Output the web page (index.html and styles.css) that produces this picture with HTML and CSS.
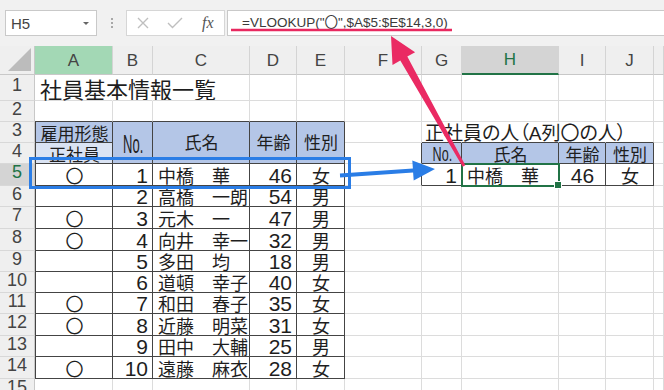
FILE: index.html
```html
<!DOCTYPE html>
<html lang="ja">
<head>
<meta charset="utf-8">
<title>VLOOKUP</title>
<link rel="stylesheet" href="styles.css">
</head>
<body>
<div class="app">
  <div class="toolbar">
    <div class="namebox"><span>H5</span><span class="caret"></span></div>
    <div class="grip"><i></i><i></i><i></i></div>
    <div class="fbtns">
      <svg class="ic ic-x" width="12" height="12" viewBox="0 0 12 12"><path d="M1 1L11 11M11 1L1 11"/></svg>
      <svg class="ic ic-ok" width="16" height="12" viewBox="0 0 16 12"><path d="M1 6L5.5 10.5L15 1"/></svg>
      <span class="fx">fx</span>
    </div>
    <div class="formula">=VLOOKUP("〇",$A$5:$E$14,3,0)</div>
  </div>

  <div class="sheet">
    <!-- column headers -->
    <div class="corner"><svg width="23" height="23" viewBox="0 0 23 23"><polygon points="23,0 23,23 0,23" fill="#bcbcbc"/></svg></div>
    <div class="ch cha">A</div><div class="ch">B</div><div class="ch">C</div><div class="ch">D</div><div class="ch">E</div><div class="ch">F</div><div class="ch">G</div><div class="ch chh">H</div><div class="ch">I</div><div class="ch">J</div><div class="ch"></div>

    <!-- row 1 -->
    <div class="rh">1</div><div class="c nr title">社員基本情報一覧</div><div class="c nr"></div><div class="c"></div><div class="c"></div><div class="c"></div><div class="c"></div><div class="c"></div><div class="c"></div><div class="c"></div><div class="c"></div><div class="c"></div>

    <!-- row 2 -->
    <div class="rh">2</div><div class="c tb"></div><div class="c tb"></div><div class="c tb"></div><div class="c tb"></div><div class="c tb"></div><div class="c"></div><div class="c"></div><div class="c"></div><div class="c"></div><div class="c"></div><div class="c"></div>

    <!-- row 3 -->
    <div class="rh">3</div>
    <div class="c t tl hd ctr hb">雇用形態</div>
    <div class="c t hd mid span2"><span class="no">No.</span></div>
    <div class="c t hd mid span2">氏名</div>
    <div class="c t hd mid span2">年齢</div>
    <div class="c t hd mid span2">性別</div>
    <div class="c"></div>
    <div class="c nr tb sub">正社員の人（A列〇の人）</div><div class="c nr tb"></div><div class="c nr tb"></div><div class="c tb"></div><div class="c"></div>

    <!-- row 4 -->
    <div class="rh">4</div>
    <div class="c t tl hd2 ctr hb">正社員</div>
    <div class="c tr"></div>
    <div class="c t hd ctr hb"><span class="no sm">No.</span></div><div class="c t hd ctr hb">氏名</div><div class="c t hd ctr hb">年齢</div><div class="c t hd ctr hb">性別</div><div class="c"></div>

    <!-- row 5 -->
    <div class="rh sel">5</div>
    <div class="c t tl ctr">〇</div><div class="c t r n">1</div><div class="c t">中橋　華</div><div class="c t r n">46</div><div class="c t ctr">女</div>
    <div class="c tr"></div>
    <div class="c t r n">1</div><div class="c t act">中橋　華</div><div class="c t ctr n">46</div><div class="c t ctr">女</div><div class="c"></div>

    <!-- row 6 -->
    <div class="rh">6</div>
    <div class="c t tl ctr"></div><div class="c t r n">2</div><div class="c t">高橋　一朗</div><div class="c t r n">54</div><div class="c t ctr">男</div>
    <div class="c"></div><div class="c"></div><div class="c"></div><div class="c"></div><div class="c"></div><div class="c"></div>

    <!-- row 7 -->
    <div class="rh">7</div>
    <div class="c t tl ctr">〇</div><div class="c t r n">3</div><div class="c t">元木　一</div><div class="c t r n">47</div><div class="c t ctr">男</div>
    <div class="c"></div><div class="c"></div><div class="c"></div><div class="c"></div><div class="c"></div><div class="c"></div>

    <!-- row 8 -->
    <div class="rh">8</div>
    <div class="c t tl ctr">〇</div><div class="c t r n">4</div><div class="c t">向井　幸一</div><div class="c t r n">32</div><div class="c t ctr">男</div>
    <div class="c"></div><div class="c"></div><div class="c"></div><div class="c"></div><div class="c"></div><div class="c"></div>

    <!-- row 9 -->
    <div class="rh">9</div>
    <div class="c t tl ctr"></div><div class="c t r n">5</div><div class="c t">多田　均</div><div class="c t r n">18</div><div class="c t ctr">男</div>
    <div class="c"></div><div class="c"></div><div class="c"></div><div class="c"></div><div class="c"></div><div class="c"></div>

    <!-- row 10 -->
    <div class="rh">10</div>
    <div class="c t tl ctr"></div><div class="c t r n">6</div><div class="c t">道頓　幸子</div><div class="c t r n">40</div><div class="c t ctr">女</div>
    <div class="c"></div><div class="c"></div><div class="c"></div><div class="c"></div><div class="c"></div><div class="c"></div>

    <!-- row 11 -->
    <div class="rh">11</div>
    <div class="c t tl ctr">〇</div><div class="c t r n">7</div><div class="c t">和田　春子</div><div class="c t r n">35</div><div class="c t ctr">女</div>
    <div class="c"></div><div class="c"></div><div class="c"></div><div class="c"></div><div class="c"></div><div class="c"></div>

    <!-- row 12 -->
    <div class="rh">12</div>
    <div class="c t tl ctr">〇</div><div class="c t r n">8</div><div class="c t">近藤　明菜</div><div class="c t r n">31</div><div class="c t ctr">女</div>
    <div class="c"></div><div class="c"></div><div class="c"></div><div class="c"></div><div class="c"></div><div class="c"></div>

    <!-- row 13 -->
    <div class="rh">13</div>
    <div class="c t tl ctr"></div><div class="c t r n">9</div><div class="c t">田中　大輔</div><div class="c t r n">25</div><div class="c t ctr">男</div>
    <div class="c"></div><div class="c"></div><div class="c"></div><div class="c"></div><div class="c"></div><div class="c"></div>

    <!-- row 14 -->
    <div class="rh">14</div>
    <div class="c t tl ctr">〇</div><div class="c t r n">10</div><div class="c t">遠藤　麻衣</div><div class="c t r n">28</div><div class="c t ctr">女</div>
    <div class="c"></div><div class="c"></div><div class="c"></div><div class="c"></div><div class="c"></div><div class="c"></div>

    <!-- row 15 -->
    <div class="rh">15</div>
    <div class="c"></div><div class="c"></div><div class="c"></div><div class="c"></div><div class="c"></div><div class="c"></div><div class="c"></div><div class="c"></div><div class="c"></div><div class="c"></div><div class="c"></div>
  </div>

  <svg class="annot" width="664" height="390" viewBox="0 0 664 390">
    <line x1="231" y1="30" x2="452" y2="30" stroke="#e8285f" stroke-width="2.5"/>
    <rect x="30.5" y="158.5" width="319" height="29" fill="none" stroke="#2a7de6" stroke-width="3"/>
    <polygon points="340.1,177.5 413.1,172.5 413.7,180.5 435,169 412.3,160.5 412.9,168.5 339.9,173.5" fill="#2a7de6"/>
    <polygon points="465.3,165.3 407.3,56.6 415.1,52.2 391,36 392.5,65 400.3,60.6 462.7,166.7" fill="#ea2a63"/>
  </svg>
</div>
</body>
</html>
```

FILE: styles.css
```css
* { box-sizing: border-box; margin: 0; padding: 0; }
html, body { width: 664px; height: 390px; overflow: hidden; background: #fff; }
body { font-family: "Liberation Sans", "Noto Sans CJK JP", sans-serif; color: #222; }

.app { position: relative; width: 664px; height: 390px; overflow: hidden; background: #fff; }

/* formula toolbar */
.toolbar { height: 46px; background: #f1f1f1; display: flex; align-items: flex-start; padding: 10px 0 0 5px; }
.namebox { width: 92px; height: 26px; background: #fff; border: 1px solid #c9c9c9; display: flex; align-items: center; justify-content: space-between; padding: 0 7px 0 5px; font-size: 15px; color: #444; }
.caret { width: 0; height: 0; border-left: 3px solid transparent; border-right: 3px solid transparent; border-top: 3px solid #666; }
.grip { width: 29px; height: 26px; display: flex; flex-direction: column; align-items: center; justify-content: center; gap: 2px; }
.grip i { display: block; width: 2px; height: 2px; background: #a8a8a8; }
.fbtns { width: 99px; height: 26px; background: #fff; border: 1px solid #d6d6d6; display: flex; align-items: center; padding-left: 10px; }
.ic { fill: none; stroke: #bfbfbf; stroke-width: 1.4; }
.ic-ok { margin-left: 18px; }
.fx { margin-left: 19px; font-family: "Liberation Serif", serif; font-style: italic; font-size: 16px; color: #555; }
.formula { flex: 1; height: 26px; margin-left: 2px; background: #fff; border: 1px solid #c9c9c9; border-right: none; font-size: 13.5px; color: #3a3a3a; padding: 0 0 5px 14px; display: flex; align-items: center; white-space: nowrap; }

/* sheet grid */
.sheet {
  display: grid;
  grid-template-columns: 35px 78px 40px 97px 47px 48px 77px 40px 97px 47px 48px 1fr;
  grid-template-rows: 29px 26px 21px 21px 21px 22px 21px 22px 22px 21px 21px 21px 22px 21px 22px 21px;
  background: #fff;
}

.corner { background: #efefef; border-right: 1px solid #c8c8c8; border-bottom: 1px solid #c8c8c8; display: flex; justify-content: flex-end; align-items: flex-end; padding: 0 3px 3px 0; }
.ch { background: #efefef; border-right: 1px solid #d4d4d4; border-bottom: 1px solid #c8c8c8; display: flex; align-items: center; justify-content: center; font-size: 17px; color: #444; padding-top: 1px; }
.cha { background: #a3d8b5; }
.chh { background: #d4d4d4; border-bottom: 2px solid #217346; color: #217346; }

.rh { background: #efefef; border-right: 1px solid #c8c8c8; border-bottom: 1px solid #d8d8d8; display: flex; align-items: center; justify-content: center; font-size: 18px; color: #444; padding-bottom: 4px; }
.rh.sel { background: #d4d4d4; color: #217346; }

.c { border-right: 1px solid #dcdcdc; border-bottom: 1px solid #dcdcdc; display: flex; align-items: flex-end; padding: 0 4px 1px 5px; font-size: 18px; line-height: 0.7; white-space: nowrap; color: #1e1e1e; }
.nr { border-right-color: transparent; }
.tb { border-bottom-color: #444; }
.tr { border-right-color: #444; }
.t { border-right-color: #444; border-bottom-color: #444; }
.tl { border-left: 1px solid #444; }
.hd { background: #b4c6e7; }
.hd2 { background: #dae3f3; }
.span2 { grid-row: span 2; }
.mid { align-items: center; justify-content: center; line-height: 1; padding-top: 3px; font-size: 17px; }
.hb { font-size: 17px; }
.r { justify-content: flex-end; }
.ctr { justify-content: center; }
.n { font-size: 21px; }
.title { font-size: 22px; padding-bottom: 2px; }
.sub { font-size: 19px; font-feature-settings: "palt"; padding-left: 3px; padding-bottom: 2px; }
.no { display: inline-block; font-size: 26px; transform: scaleX(.5); }
.no.sm { font-size: 21px; transform: scaleX(.6); }
.act { position: relative; outline: 2px solid #217346; outline-offset: -1px; }
.act::after { content: ""; position: absolute; right: -4px; bottom: -4px; width: 6px; height: 6px; background: #217346; border: 1px solid #fff; }

/* annotations */
.annot { position: absolute; left: 0; top: 0; pointer-events: none; }
```
